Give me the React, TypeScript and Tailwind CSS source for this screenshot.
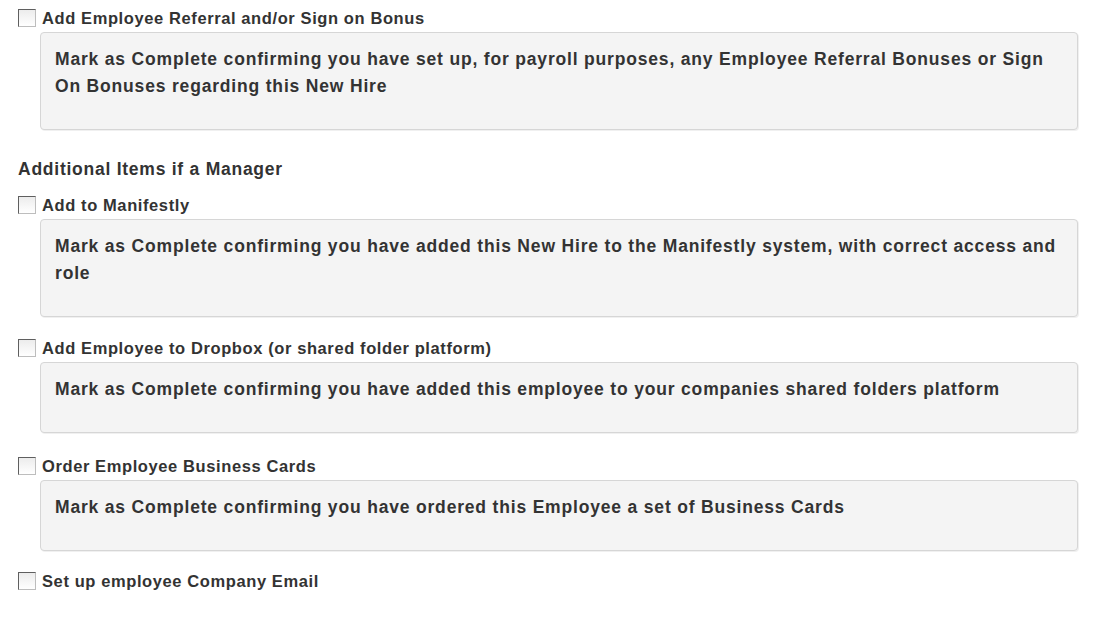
import React from "react";

function Check() {
  return (
    <span className="inline-block w-[18px] h-[18px] shrink-0 border border-t-[#5f5f5f] border-l-[#5f5f5f] border-r-[#bdbdbd] border-b-[#bdbdbd] bg-gradient-to-b from-[#ececec] to-white" />
  );
}

function Label({ text }: { text: string }) {
  return (
    <div className="flex items-center gap-[6px] h-[20px] text-[16.5px] tracking-[0.6px] leading-[20px] font-bold text-[#333]">
      <Check />
      <span>{text}</span>
    </div>
  );
}

function Well({ text }: { text: string }) {
  return (
    <div className="ml-[22px] mt-[4px] rounded-[4px] border border-[#d6d6d6] bg-[#f4f4f4] shadow-[1px_1px_0_rgba(0,0,0,0.06)] pl-[14px] pr-[14px] pt-[13px] pb-[29px] text-[17.5px] tracking-[0.82px] leading-[27px] font-bold text-[#333]">
      {text}
    </div>
  );
}

export default function App() {
  return (
    <div
      className="w-[1108px] h-[625px] bg-white pl-[18px] pr-[30px] pt-[8px]"
      style={{ fontFamily: '"Liberation Sans", Arial, Helvetica, sans-serif' }}
    >
      <Label text="Add Employee Referral and/or Sign on Bonus" />
      <Well text="Mark as Complete confirming you have set up, for payroll purposes, any Employee Referral Bonuses or Sign On Bonuses regarding this New Hire" />

      <div className="mt-[29px] h-[20px] text-[17.5px] tracking-[0.75px] leading-[20px] font-bold text-[#333]">
        Additional Items if a Manager
      </div>

      <div className="mt-[16px]">
        <Label text="Add to Manifestly" />
        <Well text="Mark as Complete confirming you have added this New Hire to the Manifestly system, with correct access and role" />
      </div>

      <div className="mt-[21px]">
        <Label text="Add Employee to Dropbox (or shared folder platform)" />
        <Well text="Mark as Complete confirming you have added this employee to your companies shared folders platform" />
      </div>

      <div className="mt-[23px]">
        <Label text="Order Employee Business Cards" />
        <Well text="Mark as Complete confirming you have ordered this Employee a set of Business Cards" />
      </div>

      <div className="mt-[20px]">
        <Label text="Set up employee Company Email" />
      </div>
    </div>
  );
}
